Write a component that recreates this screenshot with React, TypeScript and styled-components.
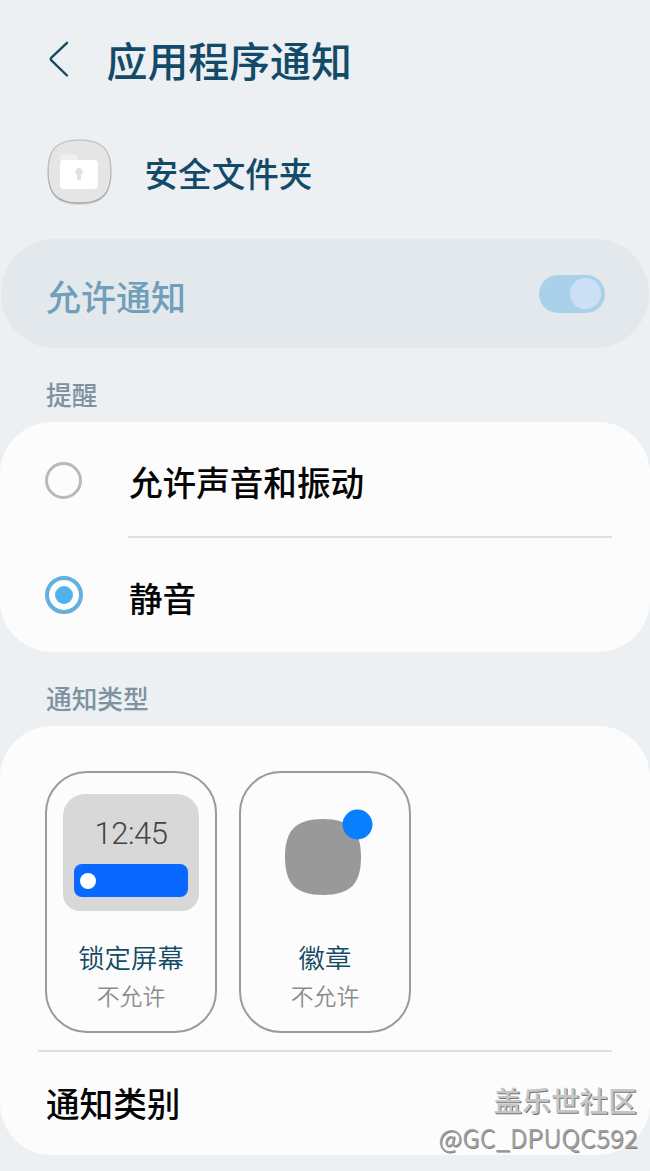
import React from 'react';
import styled, { createGlobalStyle } from 'styled-components';

const GlobalStyle = createGlobalStyle`
  * { box-sizing: border-box; }
  body {
    margin: 0;
    background: #ecf0f3;
    font-family: Roboto, 'Noto Sans CJK SC', sans-serif;
  }
`;

const Screen = styled.main`
  position: relative;
  width: 650px;
  height: 1171px;
  overflow: hidden;
  background: #ecf0f3;
`;

const Header = styled.header`
  display: flex;
  align-items: center;
  height: 118px;
  padding-left: 48px;
`;

const Title = styled.h1`
  margin: 0 0 0 36.5px;
  padding-top: 2px;
  font: 500 40.9px/60px 'Noto Sans CJK SC', sans-serif;
  color: #134a68;
  white-space: nowrap;
`;

const AppRow = styled.div`
  display: flex;
  align-items: center;
  gap: 29.5px;
  height: 107px;
  margin-bottom: 14px;
  padding-left: 44px;
`;

const AppName = styled.span`
  padding-top: 3px;
  font: 500 33.6px/48px 'Noto Sans CJK SC', sans-serif;
  color: #134a68;
`;

const Card = styled.section`
  overflow: hidden;
  border-radius: 52px;
  background: #fcfcfc;
`;

const SwitchCard = styled.section`
  display: flex;
  align-items: center;
  justify-content: space-between;
  height: 109px;
  margin: 0 1px;
  padding: 0 44px 0 45px;
  border-radius: 54px;
  background: #e3e8ed;
`;

const SwitchLabel = styled.span`
  padding-top: 4px;
  font: 500 35px/50px 'Noto Sans CJK SC', sans-serif;
  color: #709fba;
`;

const Switch = styled.div`
  display: flex;
  align-items: center;
  justify-content: flex-end;
  width: 66px;
  height: 38px;
  padding-right: 4px;
  border-radius: 19px;
  background: #a9d2ea;
`;

const Knob = styled.div`
  width: 31px;
  height: 31px;
  border-radius: 50%;
  background: #cbe0f4;
`;

const SectionLabel = styled.h2`
  height: 74px;
  margin: 0;
  padding: 27px 0 0 46px;
  font: 500 25.7px/38px 'Noto Sans CJK SC', sans-serif;
  color: #7e929f;
`;

const OptionRow = styled.div<{ $divided?: boolean }>`
  display: flex;
  align-items: center;
  height: ${p => (p.$divided ? '116px' : '114px')};
  padding: 0 38px 0 45px;
`;

const Radio = styled.div<{ $checked?: boolean }>`
  display: flex;
  align-items: center;
  justify-content: center;
  flex: none;
  width: 38px;
  height: 38px;
  border: ${p => (p.$checked ? '4px solid #62b1dc' : '3px solid #b9b9b9')};
  border-radius: 50%;
  ${p => !p.$checked && 'width: 37px; height: 37px; margin-right: 1px;'}
  &::after {
    content: '';
    display: ${p => (p.$checked ? 'block' : 'none')};
    width: 18px;
    height: 18px;
    border-radius: 50%;
    background: #51b3ee;
  }
`;

const OptionBody = styled.div<{ $divided?: boolean }>`
  display: flex;
  align-items: center;
  flex: 1;
  height: 100%;
  margin-left: 45px;
  padding: 5px 0 0 1px;
  border-bottom: ${p => (p.$divided ? '2px solid #dfdfdf' : 'none')};
`;

const RowText = styled.span`
  font: 500 33.6px/48px 'Noto Sans CJK SC', sans-serif;
  color: #050505;
`;

const TypeCard = styled(Card)`
  height: 429px;
  padding: 45px 38px 0;
`;

const Tiles = styled.div`
  display: flex;
  gap: 23px;
  padding: 0 0 17px 7px;
  border-bottom: 2px solid #dfdfdf;
`;

const Tile = styled.div`
  display: flex;
  flex-direction: column;
  align-items: center;
  width: 172px;
  height: 262px;
  padding-top: 21px;
  border: 2px solid #9b9b9b;
  border-radius: 42px;

  & + & {
    margin-left: -1px;
  }
`;

const Preview = styled.div`
  display: flex;
  flex-direction: column;
  align-items: center;
  width: 136px;
  height: 117px;
  margin-bottom: 27px;
  padding-top: 22px;
  border-radius: 22px 22px 17px 17px;
  background: #d8d8d8;
`;

const Clock = styled.span`
  font: 300 31px/36px Roboto, sans-serif;
  letter-spacing: -0.5px;
  color: #444;
`;

const NoticeBar = styled.div`
  display: flex;
  align-items: center;
  width: 114px;
  height: 33px;
  margin-top: 12px;
  padding-left: 6px;
  border-radius: 8px;
  background: #0968ff;
`;

const NoticeDot = styled.div`
  width: 16px;
  height: 16px;
  border-radius: 50%;
  background: #fff;
`;

const BadgeArt = styled.svg`
  width: 136px;
  height: 117px;
  margin-bottom: 27px;
`;

const TileName = styled.span`
  font: 350 26.4px/38px 'Noto Sans CJK SC', sans-serif;
  color: #134a64;
`;

const TileStatus = styled.span`
  margin-top: 2px;
  font: 350 22.8px/36px 'Noto Sans CJK SC', sans-serif;
  color: #8c8c8c;
`;

const CategoryRow = styled.div`
  display: flex;
  align-items: center;
  height: 102px;
  padding-left: 8px;
`;

const Watermark = styled.div`
  position: absolute;
  right: 12px;
  bottom: 17px;
  display: flex;
  flex-direction: column;
  align-items: flex-end;
`;

const Community = styled.span`
  padding-right: 1px;
  font: 500 28.7px/40px 'Noto Sans CJK SC', sans-serif;
  color: #c6c6c6;
  text-shadow: 1px 1px 0 #757575;
`;

const Handle = styled.span`
  font: 350 25.4px/34px 'Noto Sans CJK SC', sans-serif;
  color: #a0a0a0;
  text-shadow: 0.6px 0.6px 0 #808080;
`;

const BackIcon = () => (
  <svg width="22" height="38" viewBox="0 0 22 38" fill="none" stroke="#174a63" strokeWidth="2.4" strokeLinecap="round" strokeLinejoin="round">
    <path d="M19 2.8 3.4 17.7Q2 19 3.4 20.3L19 35.5" />
  </svg>
);

const FolderIcon = () => (
  <svg width="71" height="71" viewBox="0 0 71 71">
    <defs>
      <linearGradient id="rim" x1="0" y1="0" x2="0" y2="1">
        <stop offset="0" stopColor="#c6c6c6" />
        <stop offset="1" stopColor="#a5a7a9" />
      </linearGradient>
    </defs>
    <path d="M35.5 4.8C58 4.8 67 14 67 36.7S58 68.8 35.5 68.8 4 59.5 4 36.7 13 4.8 35.5 4.8Z" fill="#cfd2d4" />
    <path d="M35.5 4C58 4 67 13 67 35.5S58 67 35.5 67 4 58 4 35.5 13 4 35.5 4Z" fill="#e5e5e5" stroke="url(#rim)" strokeWidth="1.3" />
    <path d="M16 27V21.5Q16 18.500 19 18.500H31Q34 18.500 34 21.500V27Z" fill="#efefef" />
    <rect x="16" y="24" width="38" height="29" rx="4" fill="#fff" />
    <path d="M35 32a3.700 3.700 0 0 1 2 6.800V42.500a2 2 0 0 1-4 0v-3.700A3.700 3.700 0 0 1 35 32Z" fill="#e1e1e1" />
  </svg>
);

export default function App() {
  return (
    <>
      <GlobalStyle />
      <Screen>
        <Header>
          <BackIcon />
          <Title>应用程序通知</Title>
        </Header>
        <AppRow>
          <FolderIcon />
          <AppName>安全文件夹</AppName>
        </AppRow>
        <SwitchCard>
          <SwitchLabel>允许通知</SwitchLabel>
          <Switch><Knob /></Switch>
        </SwitchCard>
        <SectionLabel>提醒</SectionLabel>
        <Card>
          <OptionRow $divided>
            <Radio />
            <OptionBody $divided><RowText>允许声音和振动</RowText></OptionBody>
          </OptionRow>
          <OptionRow>
            <Radio $checked />
            <OptionBody><RowText>静音</RowText></OptionBody>
          </OptionRow>
        </Card>
        <SectionLabel>通知类型</SectionLabel>
        <TypeCard>
          <Tiles>
            <Tile>
              <Preview>
                <Clock>12:45</Clock>
                <NoticeBar><NoticeDot /></NoticeBar>
              </Preview>
              <TileName>锁定屏幕</TileName>
              <TileStatus>不允许</TileStatus>
            </Tile>
            <Tile>
              <BadgeArt viewBox="0 0 136 117">
                <path d="M66 25C93 25 104 36 104 63S93 101 66 101 28 90 28 63 39 25 66 25Z" fill="#999" />
                <circle cx="100.5" cy="30.5" r="15" fill="#087fff" />
              </BadgeArt>
              <TileName>徽章</TileName>
              <TileStatus>不允许</TileStatus>
            </Tile>
          </Tiles>
          <CategoryRow><RowText>通知类别</RowText></CategoryRow>
        </TypeCard>
        <Watermark>
          <Community>盖乐世社区</Community>
          <Handle>@GC_DPUQC592</Handle>
        </Watermark>
      </Screen>
    </>
  );
}
